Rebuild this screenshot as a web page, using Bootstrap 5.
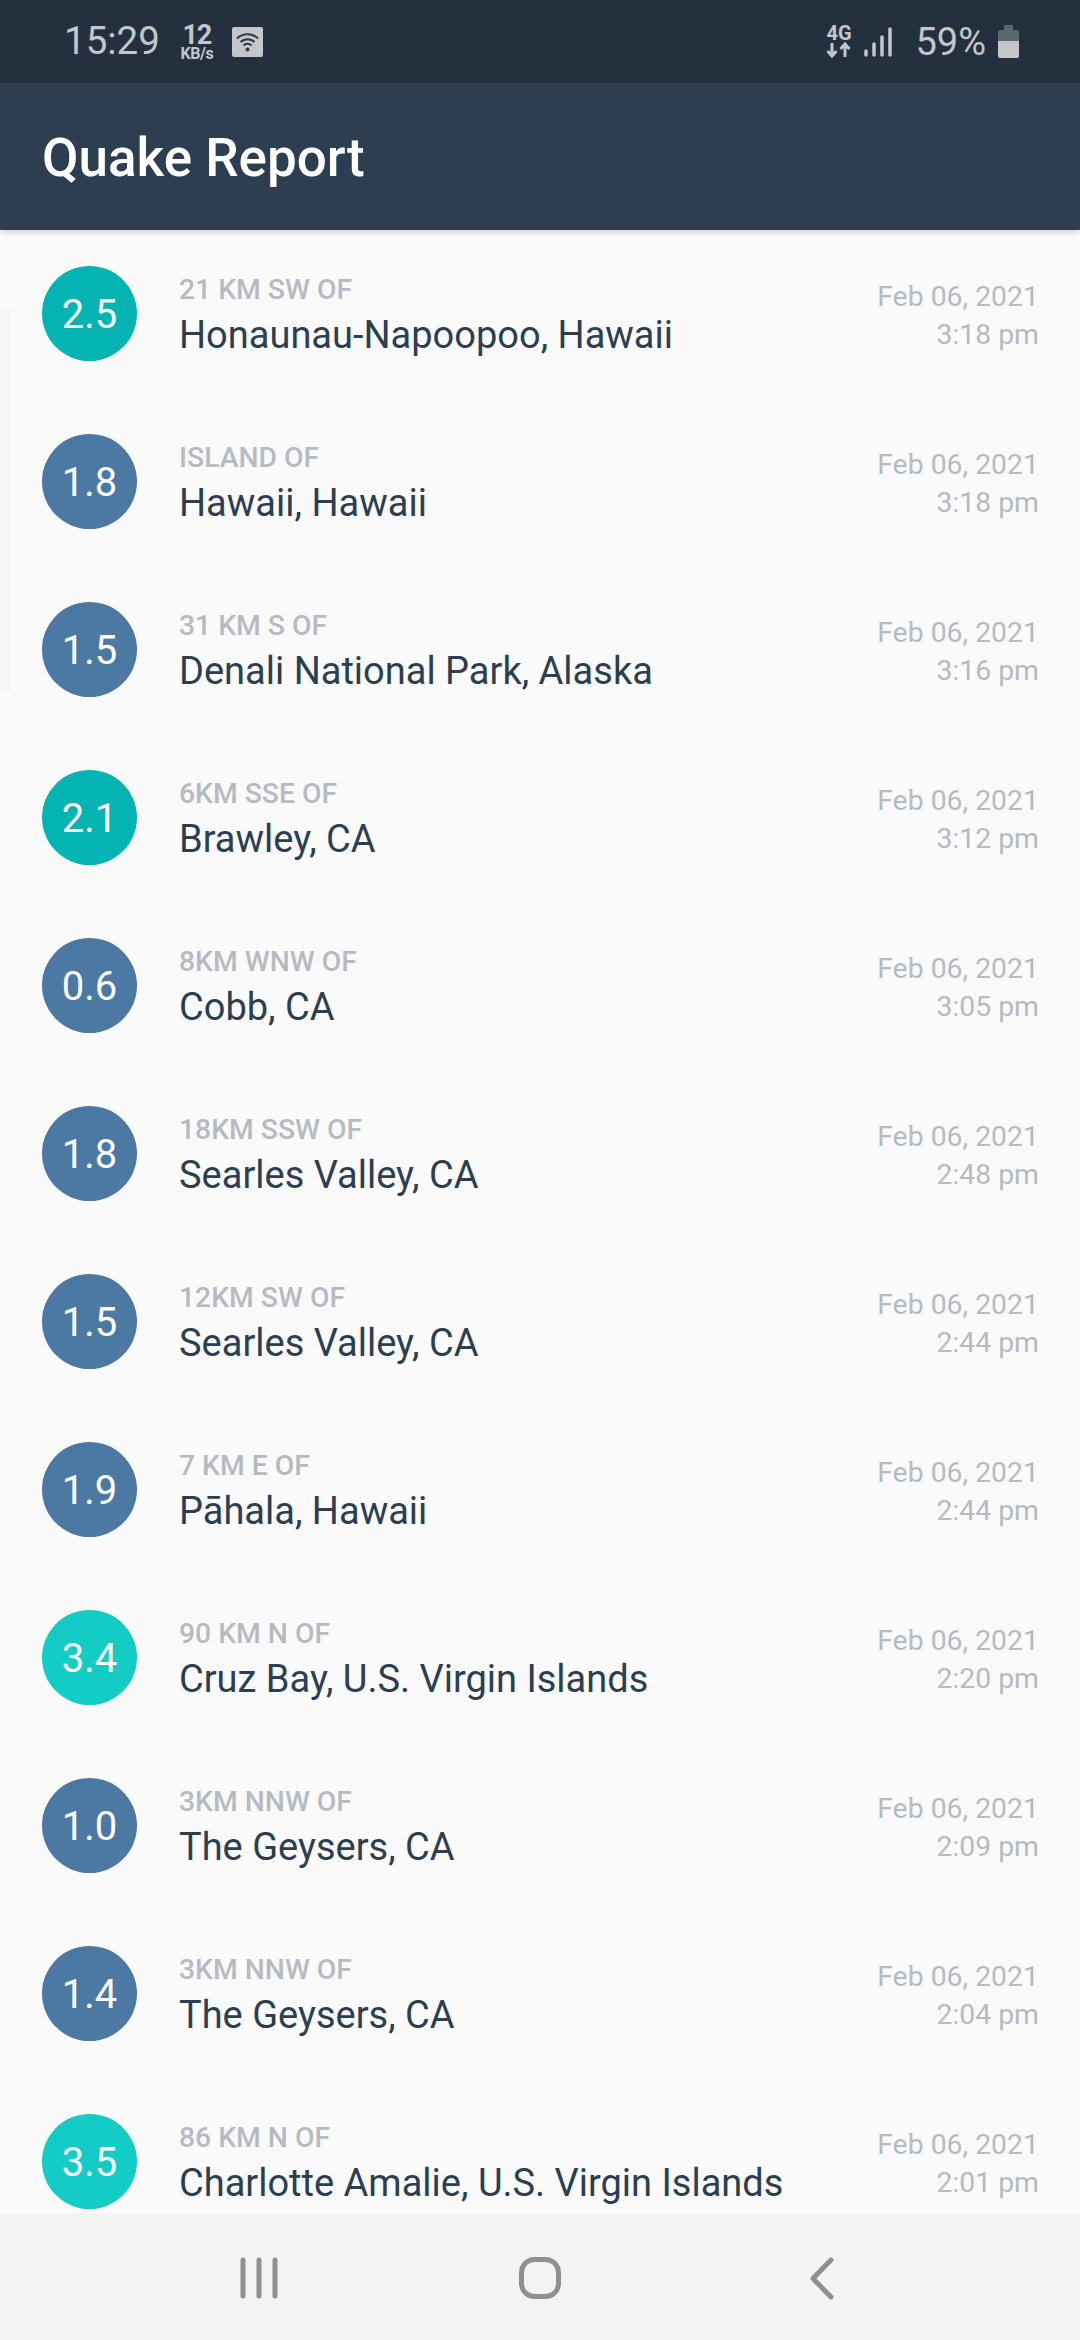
<!DOCTYPE html>
<html lang="en">
<head>
    <meta charset="UTF-8">
    <meta name="viewport" content="width=device-width, initial-scale=1.0">
    <title>Quake Report</title>
    <link href="https://cdn.jsdelivr.net/npm/bootstrap@5.3.0/dist/css/bootstrap.min.css" rel="stylesheet">
    <style>
        body {
            font-family: Roboto, "Liberation Sans", sans-serif;
            background: #fafafa;
            width: 1080px;
            height: 2340px;
            overflow: hidden;
        }
        .phone-screen { height: 2340px; }
        .status-strip {
            height: 83px;
            background: #24303e;
            color: #c3c7cc;
            padding: 0 61px 0 64px;
            flex: none;
        }
        .status-time { font-size: 38.500px; line-height: 1; margin-right: 18px; }
        .speed-box { text-align: center; font-weight: 700; width: 38px; margin-right: 16px; }
        .speed-num { font-size: 27px; line-height: 24px; display: block; letter-spacing: -1px; }
        .speed-unit { font-size: 16px; line-height: 13px; display: block; white-space: nowrap; letter-spacing: -.5px; }
        .net-box { font-weight: 700; text-align: center; margin-right: 13px; width: 25px; }
        .net-label { font-size: 20px; line-height: 17px; display: block; }
        .status-pct { font-size: 38px; line-height: 1; margin: 0 12px 0 23px; }
        .app-title-bar {
            height: 147px;
            background: #2c3e50;
            color: #fff;
            padding-left: 42px;
            box-shadow: 0 2px 6px rgba(0, 0, 0, .18);
            position: relative;
            z-index: 2;
            flex: none;
        }
        .app-title { font-size: 53px; font-weight: 500; margin: 4px 0 0; line-height: 1; }
        .quake-list { overflow: hidden; min-height: 0; position: relative; }
        .edge-glow {
            position: absolute;
            left: 0;
            top: 80px;
            width: 10px;
            height: 382px;
            background: #f6f6f7;
        }
        .quake-row { height: 168px; padding: 36px 41px 36px 42px; position: relative; flex: none; }
        .mag-dot {
            width: 95px;
            height: 95px;
            color: #fff;
            font-size: 40px;
            padding-top: 3px;
            flex: none;
            margin-right: 42px;
        }
        .mag-low { background: #4c78a4; }
        .mag-mid { background: #04b4b3; }
        .mag-high { background: #14ccc6; }
        .quake-offset { font-size: 28.300px; line-height: 32px; color: #b6bac2; font-weight: 500; margin-top: 8px; }
        .quake-place { font-size: 38px; line-height: 44px; color: #2c3e50; margin-top: 7px; }
        .quake-when { font-size: 28.400px; line-height: 38px; color: #b6bac2; text-align: right; margin-top: 12px; }
        .soft-bar { height: 126px; background: #f3f3f3; flex: none; position: relative; z-index: 2; }
    </style>
</head>
<body>
    <div class="phone-screen d-flex flex-column">
        <div class="status-strip d-flex align-items-center">
            <span class="status-time">15:29</span>
            <span class="speed-box"><span class="speed-num">12</span><span class="speed-unit">KB/s</span></span>
            <svg width="31" height="30" viewBox="0 0 31 30">
                <rect width="31" height="30" rx="2" fill="#c3c7cc"/>
                <path d="M5 11.500a15 15 0 0 1 21 0M8.500 15a10 10 0 0 1 14 0M11.500 18.500a5.500 5.500 0 0 1 8 0" fill="none" stroke="#2c3a48" stroke-width="2"/>
                <circle cx="15.500" cy="22.500" r="2" fill="#2c3a48"/>
            </svg>
            <span class="ms-auto net-box">
                <span class="net-label">4G</span>
                <svg class="d-block" width="25" height="16" viewBox="0 0 24 16">
                    <path d="M5.500 1v13M1 9l4.500 5L10 9M18.500 15V2M14 7l4.500-5L23 7" fill="none" stroke="#c3c7cc" stroke-width="3"/>
                </svg>
            </span>
            <svg width="28" height="30" viewBox="0 0 28 30">
                <path d="M2 24v4M10 17v11M18 10v18M26 2v26" stroke="#c3c7cc" stroke-width="3.500" stroke-linecap="round"/>
            </svg>
            <span class="status-pct">59%</span>
            <svg width="21" height="33" viewBox="0 0 21 33">
                <path d="M6 0h9v5h4a2 2 0 0 1 2 2v9H0V7a2 2 0 0 1 2-2h4z" fill="#5c6670"/>
                <path d="M0 16h21v15a2 2 0 0 1-2 2H2a2 2 0 0 1-2-2z" fill="#c3c7cc"/>
            </svg>
        </div>
        <div class="app-title-bar d-flex align-items-center">
            <h1 class="app-title">Quake Report</h1>
        </div>
        <div id="quakes" class="quake-list flex-grow-1 d-flex flex-column">
            <div class="edge-glow"></div>
        </div>
        <div class="soft-bar">
            <svg class="d-block" width="1080" height="126" viewBox="0 0 1080 126">
                <path d="M243 46v36M259 46v36M275 46v36" stroke="#8f8f8f" stroke-width="5" stroke-linecap="round" fill="none"/>
                <rect x="521.500" y="45.500" width="37" height="37" rx="13" fill="none" stroke="#8f8f8f" stroke-width="5"/>
                <path d="M831 46 813 64.500 831 83" stroke="#8f8f8f" stroke-width="5" stroke-linecap="round" stroke-linejoin="round" fill="none"/>
            </svg>
        </div>
    </div>

    <script src="https://cdn.jsdelivr.net/npm/bootstrap@5.3.0/dist/js/bootstrap.bundle.min.js"></script>
    <script>
        const quakes = [
            ['2.5', 'mid', '21 KM SW OF', 'Honaunau-Napoopoo, Hawaii', '3:18 pm'],
            ['1.8', 'low', 'ISLAND OF', 'Hawaii, Hawaii', '3:18 pm'],
            ['1.5', 'low', '31 KM S OF', 'Denali National Park, Alaska', '3:16 pm'],
            ['2.1', 'mid', '6KM SSE OF', 'Brawley, CA', '3:12 pm'],
            ['0.6', 'low', '8KM WNW OF', 'Cobb, CA', '3:05 pm'],
            ['1.8', 'low', '18KM SSW OF', 'Searles Valley, CA', '2:48 pm'],
            ['1.5', 'low', '12KM SW OF', 'Searles Valley, CA', '2:44 pm'],
            ['1.9', 'low', '7 KM E OF', 'Pāhala, Hawaii', '2:44 pm'],
            ['3.4', 'high', '90 KM N OF', 'Cruz Bay, U.S. Virgin Islands', '2:20 pm'],
            ['1.0', 'low', '3KM NNW OF', 'The Geysers, CA', '2:09 pm'],
            ['1.4', 'low', '3KM NNW OF', 'The Geysers, CA', '2:04 pm'],
            ['3.5', 'high', '86 KM N OF', 'Charlotte Amalie, U.S. Virgin Islands', '2:01 pm']
        ];

        const list = document.getElementById('quakes');
        quakes.forEach(q => {
            const row = document.createElement('div');
            row.className = 'quake-row d-flex';
            row.innerHTML = `
                <div class="mag-dot mag-${q[1]} rounded-circle d-flex align-items-center justify-content-center">${q[0]}</div>
                <div class="flex-grow-1">
                    <div class="quake-offset">${q[2]}</div>
                    <div class="quake-place">${q[3]}</div>
                </div>
                <div class="quake-when">Feb 06, 2021<br>${q[4]}</div>
            `;
            list.appendChild(row);
        });
    </script>
</body>
</html>
